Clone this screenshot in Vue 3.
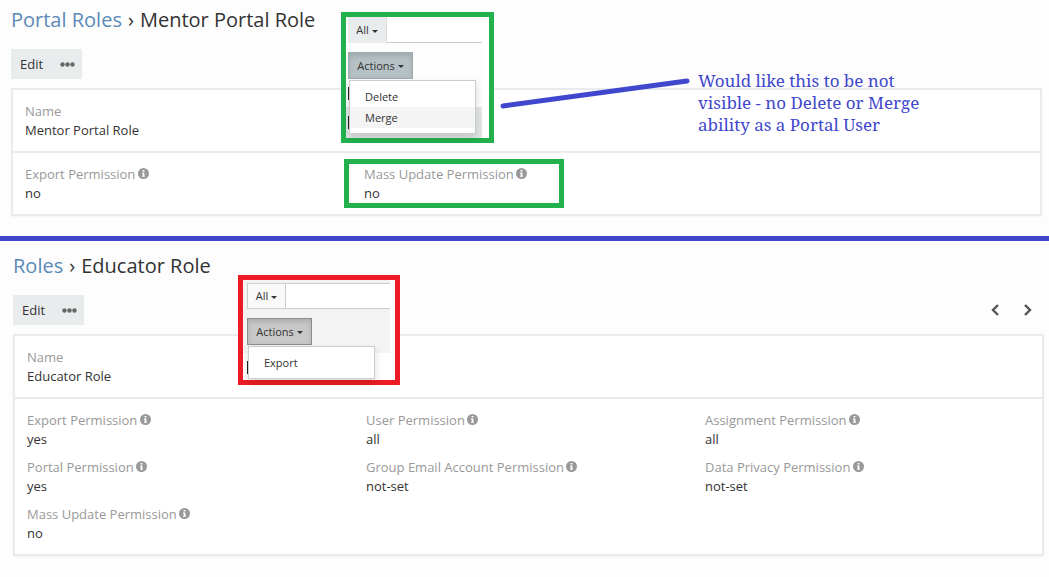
<template>
  <main class="page">
    <section v-for="role in roles" :key="role.name" class="record" :class="role.kind">
      <h1 class="record-title">
        <a href="#">{{ role.scope }}</a>
        <span class="separator">›</span>
        <span>{{ role.name }}</span>
      </h1>

      <div class="record-bar">
        <div class="button-group">
          <button type="button" class="btn-edit">Edit</button>
          <button type="button" class="btn-more" aria-label="More">
            <svg width="15" height="5" viewBox="0 0 15 5">
              <circle cx="2.5" cy="2.5" r="2.2" />
              <circle cx="7.5" cy="2.5" r="2.2" />
              <circle cx="12.5" cy="2.5" r="2.2" />
            </svg>
          </button>
        </div>
        <div v-if="role.kind === 'internal'" class="pager">
          <button type="button" aria-label="Previous">
            <svg width="10" height="14" viewBox="0 0 10 14"><path d="M8 2L3 7l5 5" /></svg>
          </button>
          <button type="button" aria-label="Next">
            <svg width="10" height="14" viewBox="0 0 10 14"><path d="M3 2l5 5-5 5" /></svg>
          </button>
        </div>
      </div>

      <div class="panel">
        <dl class="panel-row">
          <div class="field">
            <dt>Name</dt>
            <dd>{{ role.name }}</dd>
          </div>
        </dl>
        <dl class="panel-row">
          <div v-for="field in role.fields" :key="field.label" class="field">
            <dt>
              {{ field.label }}
              <svg class="info" width="11" height="11" viewBox="0 0 11 11">
                <circle cx="5.5" cy="5.5" r="5.5" fill="#999" />
                <path d="M4.6 2h1.8v1.5H4.6zM4 4.4h2.4v3.4H7v1H4v-1h.7V5.4H4z" fill="#fff" />
              </svg>
            </dt>
            <dd>{{ field.value }}</dd>
          </div>
        </dl>
      </div>

      <!-- 列表页的操作菜单 -->
      <div class="callout">
        <div class="list-view">
          <div class="search">
            <button type="button" class="btn-filter">All <i class="caret"></i></button>
            <input type="text" aria-label="Search">
          </div>
          <button type="button" class="btn-actions">Actions <i class="caret"></i></button>
          <div class="list-rows">
            <ul class="menu">
              <li v-for="action in role.actions" :key="action" :class="{ active: action === 'Merge' }">
                <a href="#">{{ action }}</a>
              </li>
            </ul>
          </div>
        </div>
      </div>

      <template v-if="role.kind === 'portal'">
        <div class="highlight"></div>
        <svg class="pointer" width="192" height="34" viewBox="0 0 192 34">
          <path d="M4 28L188 3" />
        </svg>
        <p class="note">Would like this to be not<br>visible - no Delete or Merge<br>ability as a Portal User</p>
      </template>
    </section>
  </main>
</template>

<script setup>
const roles = [
  {
    kind: 'portal',
    scope: 'Portal Roles',
    name: 'Mentor Portal Role',
    actions: ['Delete', 'Merge'],
    fields: [
      { label: 'Export Permission', value: 'no' },
      { label: 'Mass Update Permission', value: 'no' }
    ]
  },
  {
    kind: 'internal',
    scope: 'Roles',
    name: 'Educator Role',
    actions: ['Export'],
    fields: [
      { label: 'Export Permission', value: 'yes' },
      { label: 'User Permission', value: 'all' },
      { label: 'Assignment Permission', value: 'all' },
      { label: 'Portal Permission', value: 'yes' },
      { label: 'Group Email Account Permission', value: 'not-set' },
      { label: 'Data Privacy Permission', value: 'not-set' },
      { label: 'Mass Update Permission', value: 'no' }
    ]
  }
]
</script>

<style>
body {
  margin: 0;
  background: #fdfdfd;
}
</style>

<style scoped>
.page {
  font-family: "Open Sans", "Noto Sans", sans-serif;
  font-size: 13px;
  line-height: 19px;
  color: #333;
}

.page * {
  box-sizing: border-box;
}

button, input {
  font: inherit;
  color: inherit;
  margin: 0;
  padding: 0;
  border: none;
  border-radius: 0;
}

a {
  color: inherit;
  text-decoration: none;
}

/* #region 记录 */
.record {
  position: relative;
}

.portal {
  padding: 6px 7px 20px 11px;
  border-bottom: 5px solid #3f48cc;
}

.internal {
  padding: 11px 5px 20px 13px;
}

.record-title {
  display: flex;
  gap: 6px;
  margin: 0 0 15px;
  font-size: 20px;
  font-weight: 400;
  line-height: 28px;
}

.record-title a {
  color: #5a8ab8;
}

.record-bar {
  display: flex;
  justify-content: space-between;
  align-items: center;
  margin-bottom: 9px;
}

.button-group {
  display: flex;
  height: 30px;
  background: #e8eced;
}

.button-group button {
  background: none;
}

.btn-edit {
  padding: 0 9px;
}

.btn-more {
  padding: 0 7px 0 8px;
}

.btn-more svg {
  display: block;
  fill: #666;
}

.pager {
  display: flex;
  gap: 10px;
  padding-right: 6px;
}

.pager button {
  width: 22px;
  height: 30px;
  background: none;
}

.pager svg {
  display: block;
  margin: 0 auto;
  fill: none;
  stroke: #555;
  stroke-width: 2.4;
}

.panel {
  border: 2px solid #e8eced;
  background: #fff;
  box-shadow: 0 1px 2px rgba(0, 0, 0, 0.05);
}

.panel-row {
  display: grid;
  grid-template-columns: repeat(3, 1fr);
  gap: 9px 14px;
  margin: 0;
  padding: 12px 12px 11px;
}

.panel-row + .panel-row {
  border-top: 2px solid #e8eced;
}

.field dt {
  color: #999;
}

.field dd {
  margin: 0;
}

.info {
  display: inline-block;
  margin-left: -1px;
}
/* #endregion */

/* #region 标注 */
.callout {
  position: absolute;
  background: #fff;
}

.portal .callout {
  top: 12px;
  left: 341px;
  width: 153px;
  height: 131px;
  padding-right: 7px;
  border: 5px solid #22b14c;
}

.internal .callout {
  top: 34px;
  left: 238px;
  width: 162px;
  height: 110px;
  padding-right: 5px;
  border: 5px solid #ed1c24;
}

.list-view {
  height: 100%;
  font-size: 11px;
  line-height: 16px;
}

.portal .list-view {
  padding-left: 2px;
  background: linear-gradient(#fdfdfd 90px, #e3e7e8 90px);
}

.internal .list-view {
  padding: 3px 0 0 4px;
  background: linear-gradient(#f3f3f3 73px, #fff 73px);
}

.search {
  display: flex;
  height: 26px;
  margin-bottom: 9px;
}

.btn-filter {
  flex: none;
  width: 39px;
  background: #e8eced;
  border: 1px solid #ddd;
  border-width: 0 1px 0 0;
}

.internal .btn-filter {
  background: #f9f9f9;
  border-color: #ccc;
  border-width: 1px;
}

.search input {
  flex: 1;
  min-width: 0;
  background: #fff;
  border-bottom: 1px solid #ccc;
}

.internal .search input {
  border-top: 1px solid #ccc;
}

.btn-actions {
  display: block;
  width: 65px;
  height: 27px;
  border: 1px solid #9eabaf;
  background: #b5c1c5;
  box-shadow: inset 0 3px 5px rgba(0, 0, 0, 0.125);
}

.internal .btn-actions {
  border-color: #8c8c8c;
  background: #c8c8c8;
}

.caret {
  display: inline-block;
  vertical-align: middle;
  border-top: 3px solid #333;
  border-left: 3px solid transparent;
  border-right: 3px solid transparent;
}

/* 菜单左侧露出的复选框边缘 */
.list-rows {
  padding: 1px 0 0 1px;
  background-image: linear-gradient(#222, #222), linear-gradient(#222, #222);
  background-repeat: no-repeat;
}

.portal .list-rows {
  background-size: 1px 13px;
  background-position: 0 8px, 0 37px;
}

.internal .list-rows {
  background-size: 1px 13px;
  background-position: 0 16px;
}

.menu {
  width: 127px;
  margin: 0;
  padding: 5px 0;
  list-style: none;
  background: #fff;
  border: 1px solid #ccc;
  box-shadow: 0 4px 8px rgba(0, 0, 0, 0.15);
}

.menu li {
  padding: 3px 15px 2px;
}

.menu .active {
  background: #f4f4f4;
}

.highlight {
  position: absolute;
  top: 159px;
  left: 344px;
  width: 220px;
  height: 49px;
  border: 5px solid #22b14c;
}

.pointer {
  position: absolute;
  top: 78px;
  left: 499px;
  fill: none;
  stroke: #3f48cc;
  stroke-width: 5;
  stroke-linecap: round;
}

.note {
  position: absolute;
  top: 70px;
  left: 698px;
  margin: 0;
  font-family: "Noto Serif", "Liberation Serif", serif;
  font-size: 17px;
  line-height: 22px;
  color: #3f48cc;
}
/* #endregion */
</style>
